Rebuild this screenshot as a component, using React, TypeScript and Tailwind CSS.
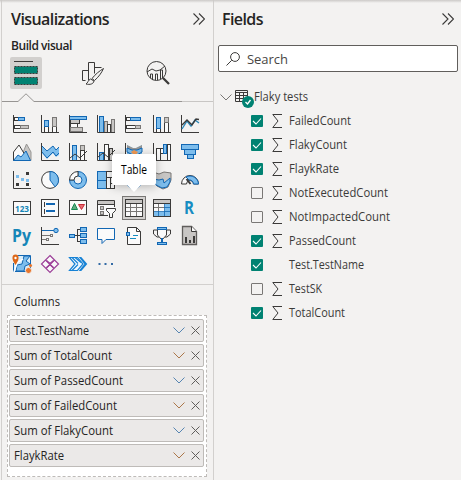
import React from "react";

const K = "#3b3a39";
const B = "#1267b3";
const L = "#7dbdec";
const G = "#c8c6c4";
const W = "#fafafa";

type BoxProps = { x: number; y: number; w: number; h: number; f?: string; s?: string };
const R = ({ x, y, w, h, f = W, s = K }: BoxProps) => (
  <rect x={x + 0.5} y={y + 0.5} width={w - 1} height={h - 1} fill={f} stroke={s} />
);
const Axis = () => <path d="M.5 0V17.5H18" fill="none" stroke={K} />;

const icons: React.ReactNode[] = [
  <><Axis /><R x={1} y={2} w={5} h={4} /><R x={5} y={2} w={7} h={4} f={L} s={B} /><R x={1} y={10} w={7} h={4} /><R x={7} y={10} w={9} h={4} f={G} s="#797775" /></>,
  <><Axis /><R x={3} y={11} w={5} h={7} /><R x={3} y={5} w={5} h={7} f={L} s={B} /><R x={11} y={11} w={5} h={7} /><R x={11} y={2} w={5} h={10} f={G} s="#797775" /></>,
  <><R x={1} y={4} w={10} h={5} f={G} /><R x={1} y={8} w={8} h={5} /><R x={1} y={12} w={13} h={5} f={G} s="#797775" /><R x={0} y={1} w={18} h={4} f={L} s={B} /><Axis /></>,
  <><R x={7} y={6} w={4} h={12} f={G} s="#797775" /><R x={10} y={9} w={4} h={9} /><R x={14} y={4} w={4} h={14} f={G} s="#797775" /><R x={2} y={1} w={5} h={17} f={L} s={B} /><Axis /></>,
  <><Axis /><R x={1} y={2} w={5} h={4} /><R x={5} y={2} w={11} h={4} f={L} s={B} /><R x={1} y={10} w={10} h={4} /><R x={10} y={10} w={6} h={4} f={G} s="#797775" /></>,
  <><Axis /><R x={3} y={13} w={5} h={5} /><R x={3} y={2} w={5} h={12} f={L} s={B} /><R x={11} y={7} w={5} h={11} /><R x={11} y={2} w={5} h={6} f={G} s="#797775" /></>,
  <><Axis /><path d="m1 13 5-8 4 5 4-6 4 3" fill="none" stroke="#2b88b8" strokeWidth="1.4" transform="translate(0 1)" /><path d="m1 10 5-5 5 5 4-6 3 .500" fill="none" stroke={K} strokeWidth="1.4" /></>,

  <><path d="M7 17 13.5 1 18 9v8.5z" fill={G} stroke="#979593" /><path d="M.5 17.5V9L6 2 12 12v5.500z" fill={W} stroke={K} /><path d="M.5 17.500 5 12l3 2 5-6 4.500 9.500z" fill={L} stroke={B} /></>,
  <><path d="m1 3 5 5 6-5 3 4 3-3v8l-3 2-3-4-6 6-5-6z" fill={L} /><path d="m1 3 5 5 6-5 3 4 3-3M1 9l5 6 6-6 3 4 3-3" fill="none" stroke={B} /><Axis /></>,
  <><R x={3} y={2} w={5} h={16} f={L} s={B} /><R x={11} y={2} w={5} h={6} f={G} s="#797775" /><R x={11} y={7} w={5} h={11} /><Axis /><path d="m1 15 5-4 5 4 7-7" fill="none" stroke={K} /></>,
  <><R x={2} y={9} w={5} h={9} f={L} s={B} /><R x={7} y={1} w={5} h={17} /><R x={12} y={5} w={4} h={13} f={G} /><Axis /><path d="m1 14 5-4 5 4 7-7" fill="none" stroke={K} /></>,
  <><path d="m2 2 6 3h3l6-3v13l-5-6H8l-6 5z" fill={L} /><path d="m2 2 6 3h3l6-3v5l-6 3H8L2 7z" fill="#979593" /><path d="m2 5 5 2h5l5-2v4l-5 3H8L2 9z" fill={L} stroke={B} /><path d="m6 9 3-2 4 2-3 4z" fill="#f39a52" /><Axis /></>,
  <><Axis /><R x={3} y={5} w={5} h={13} /><R x={7} y={5} w={5} h={6} /><R x={10} y={1} w={4} h={10} f={L} s={B} /><R x={14} y={1} w={4} h={17} /></>,
  <><R x={0} y={1} w={18} h={6} f={L} s={B} /><R x={3} y={6} w={12} h={6} f={L} s={B} /><R x={6} y={11} w={7} h={5} f={L} s={B} /></>,

  <><Axis /><path d="M13 1h3v3h-3zM3 12h3v3H3zM13 12h3v3h-3z" fill={K} /><path d="M3 4h3v3H3zM8 7h3v3H8zM13 8h3v3h-3z" fill={L} /></>,
  <><circle cx="9" cy="9" r="8.400" fill={W} stroke={K} /><path d="M9 .5a8.500 8.500 0 0 1 5 15.300L9 9z" fill={L} stroke={B} /></>,
  <><path fillRule="evenodd" d="M9 .5a8.500 8.500 0 1 1-8.500 8.500H5A4 4 0 1 0 9 5z" fill={L} stroke={B} /><path d="M.5 9A8.500 8.500 0 0 1 9 .5V5a4 4 0 0 0-4 4z" fill={W} stroke={K} /></>,
  <><R x={0} y={0} w={10} h={18} f={L} s={B} /><path d="M0 9.500h10" stroke={B} /><R x={9} y={0} w={9} h={7} /><R x={9} y={6} w={9} h={12} /><path d="M13.500 6v12M13 12.500h5" stroke={K} /></>,
  <><circle cx="9" cy="9" r="8.500" fill={L} stroke={B} /><path d="M2 6h14M2 12h14M9 1v16" stroke={B} /></>,
  <><path d="m0 1 6 2 5-2 7 1v7l-3 7-5 2-6-3-4-7z" fill={G} stroke="#797775" /><path d="m0 8 6 1 4-1 1 4 6-5v4l-3 5-5 1-6-3z" fill={L} stroke={B} /></>,
  <><path d="M.5 13a8.500 8.500 0 0 1 17 0h-5a3.500 3.500 0 0 0-7 0z" fill={W} stroke={K} /><path d="M5 6a8.500 8.500 0 0 1 12.500 7h-5A4 4 0 0 0 8 9z" fill={L} stroke={B} /><path d="m9.500 13-4-5" stroke={K} strokeWidth="2" /></>,

  <><R x={0} y={2} w={18} h={14} /><text x="2" y="12.500" fontSize="9.500" fontWeight="700" fill="#1686b8" textLength="14" lengthAdjust="spacingAndGlyphs" fontFamily="Open Sans">123</text></>,
  <><R x={0} y={0} w={18} h={18} /><path d="M3.500 3v5M3.500 10v5" stroke={K} /><path d="M5 5h9M5 12h9" stroke={B} strokeWidth="2" /></>,
  <><R x={0} y={1} w={18} h={15} /><path d="m2.500 10.500 3-6 3 6z" fill="#61aa80" stroke="#148852" /><path d="m9.500 5.500 3 5 3-5z" fill="#e86c72" stroke="#c82c37" /></>,
  <><path d="M17.500 8V1.500H.5v15H11" fill={W} stroke={K} /><path d="M1 2h16v3H1z" fill={G} /><path d="M1 5.500h16" stroke={K} /><R x={3} y={7} w={4} h={4} f={G} s="#797775" /><R x={3} y={12} w={4} h={4} f={G} s="#797775" /><path d="M9.500 9.500h9v2l-3 3v4h-3v-4l-3-3z" fill={W} stroke={K} /></>,
  <><R x={0} y={0} w={18} h={18} /><path d="M1 1h16v3H1z" fill={G} /><path d="M1 4.500h16" stroke={K} /><path d="M1 8.500h16M1 12.500h16M5.500 5v12M11.500 5v12" stroke="#797775" /></>,
  <><R x={0} y={0} w={18} h={18} /><path d="M12 5h5v12H1v-4h11z" fill={L} /><path d="M1 1h16v3H1z" fill={G} /><path d="M0 4.500h18" stroke={K} /><path d="M1 8.500h11M5.500 5v7" stroke="#797775" /><path d="M12 8.500h5M1 12.500h16M5.500 12v5M11.500 5v12" stroke={B} strokeWidth=".8" /></>,
  <text x="3" y="15" fontSize="17" fontWeight="700" fill="#168dc2" textLength="10" lengthAdjust="spacingAndGlyphs" fontFamily="Open Sans">R</text>,

  <text x="-1" y="14.500" fontSize="17" fontWeight="700" fill="#1686b8" textLength="19" lengthAdjust="spacingAndGlyphs" fontFamily="Open Sans">Py</text>,
  <><Axis /><path d="M1 3.500h12" stroke={B} /><circle cx="15" cy="3.500" r="2.200" fill={L} stroke={B} /><path d="M1 8.500h8M1 12.500h4" stroke="#797775" /><R x={9} y={7} w={3} h={3} s="#797775" /><R x={5} y={11} w={3} h={3} s="#797775" /></>,
  <><path d="M6 8.500h6M8.500 2.500v12M8 2.500h4M8 14.500h4" stroke={K} fill="none" /><R x={0} y={7} w={6} h={4} f={L} s={B} /><R x={11} y={0} w={7} h={5} f={L} s={B} /><R x={11} y={6} w={7} h={5} f={L} s={B} /><R x={11} y={12} w={7} h={5} f={L} s={B} /></>,
  <path d="M.5 1.500h17v11H9l-4 4v-4H.5z" fill={W} stroke={B} />,
  <><path d="M2.500.5h9l4 4v13h-13z" fill={W} stroke={K} /><path d="M11.500.5v4h4" fill="none" stroke={K} /><R x={1} y={5} w={4} h={4} f={L} s={B} /><path d="M8 8.500h5M5 11.500h6" stroke="#168dc2" /></>,
  <><path d="M4 3H.5v4L4 10h2M14 3h3.500v4L14 10h-2" fill="none" stroke={K} /><path d="M4.500 2v6L9 13l4.500-5V2z" fill={W} stroke={K} /><R x={4} y={0} w={10} h={3} f={L} s={B} /><path d="M9 11v4" stroke={B} strokeWidth="2" /><R x={4} y={15} w={10} h={3} f={L} s={B} /></>,
  <><path d="M1.500-.5h9l5 5v13h-14z" fill={G} stroke="#605e5c" strokeWidth="1.300" /><path d="M10.500-.5v5h5" fill={W} stroke={K} /><path d="M4 10h2v6H4zM8 13h2v3H8zM12 9h2v7h-2z" fill={K} /></>,

  <><path d="M4.500.500h13v16H.5V8" fill="#d9edfa" stroke={B} /><path d="M11 1h6l-4 5 4 3-5 2-1 5H3l1-6 5-1z" fill={L} stroke={B} /><path d="M1 17 4 8l6-4" fill="none" stroke="#fff" strokeWidth="1.500" /><path d="M2.500 10C0 6-.5 5-.5 2.500a3 3 0 0 1 6 0C5.500 5 5 6 2.500 10z" fill="#dd6718" /><circle cx="2.500" cy="3" r="1.200" fill="#fff" /><circle cx="15.500" cy="15.500" r="3" fill="#e8762d" stroke="#f3f2f1" strokeWidth=".8" /><circle cx="17.500" cy="10.500" r="1.600" fill="#e8762d" /></>,
  <g fill={W} stroke="#9c3f98" strokeWidth="1.200"><path d="m9 .5 8.500 8.500L9 17.500.5 9zM4.500 5l8.500 8.500M13.500 5 5 13.500" /><path d="m5.500 5.500 3.500 3 3.500-3M5.500 12.500l3.500-3 3.500 3" fill="none" /></g>,
  <g fill="#eff8ff" stroke="#1682d5" strokeWidth="1.200"><path d="M.5 2.500h8L14 9l-5.500 6.500h-8L6 9z" /><path d="m3 2.500 6 6M6 2.500l6 5M3 15.500l6-6" /><path d="M11 2.500h1l5.500 6.500-5.500 6.500h-1L16 9z" /></g>,
  <path d="M1.500 8h2v2h-2zM7.500 8h2v2h-2zM14 8h2v2h-2z" fill="#336ba5" />,
];

const Label = ({ children, w, color = "#252423" }: { children: string; w: number; color?: string }) => (
  <svg className="block h-4 shrink-0 overflow-visible" width={w} height="16" aria-label={children}>
    <text x="0" y="12" fontSize="12" fill={color} textLength={w} lengthAdjust="spacingAndGlyphs" fontFamily="Open Sans">{children}</text>
  </svg>
);

const Collapse = () => (
  <svg className="h-3 w-3" viewBox="0 0 12 12" fill="none" stroke="#3b3a39" strokeWidth="1.1"><path d="m.5.5 5.500 5.500L.5 11.500M6 .5 11.500 6 6 11.500" /></svg>
);

const columns: [string, number, string][] = [
  ["Test.TestName", 75, "#5685b2"], ["Sum of TotalCount", 98, "#ab7648"], ["Sum of PassedCount", 109, "#5685b2"],
  ["Sum of FailedCount", 103, "#ab7648"], ["Sum of FlakyCount", 99, "#5685b2"], ["FlaykRate", 50, "#ab7648"],
];
const fields: [string, number, boolean, boolean][] = [
  ["FailedCount", 62, true, true], ["FlakyCount", 58, true, true], ["FlaykRate", 50, true, true],
  ["NotExecutedCount", 99, false, true], ["NotImpactedCount", 101, false, true], ["PassedCount", 67, true, true],
  ["Test.TestName", 75, true, false], ["TestSK", 33, false, true], ["TotalCount", 56, true, true],
];

export default function App() {
  return (
    <div className="relative flex h-[480px] w-[461px] overflow-hidden bg-[#f3f2f1] font-['Open_Sans',sans-serif] text-[#252423]">
      <section className="w-[214px] shrink-0 border-r border-[#d2d0ce] pl-px">
        <div className="h-[480px] border-l border-[#d2d0ce]">
          <header className="flex h-[37px] items-center justify-between pl-[9px] pr-2 pt-[1px]">
            <h1 className="text-base font-semibold leading-5 tracking-[-0.57px]">Visualizations</h1><Collapse />
          </header>
          <h2 className="h-5 pl-[9px] text-xs font-semibold leading-[17px] tracking-[-0.45px]">Build visual</h2>
          <div className="flex h-[32px] pl-2">
            <div className="mr-[39px] h-8 w-8 rounded-xs bg-[#d2d0ce]">
              <svg className="size-8" viewBox="0 0 32 32"><path d="M4 4.500h19" stroke={K} /><g fill="#008272" stroke={K} strokeDasharray="2 1"><path d="M4.500 9.500h23v7h-23zM4.500 20.500h23v7h-23z" /></g></svg>
            </div>
            <svg className="mr-[41px] mt-[5px] h-6 w-6" viewBox="0 0 24 24" fill="none" stroke={K}><path d="M4.500 18.500h-3v-10h6V18M7.500 9V.5h6v11M13.500 5.500h7" /><path d="M22.500 6.500c-4 2.500-8 5.500-11.500 10l2.500 2c4-3.500 7-7.500 9-12z" /><path d="M5 22c2-1 2-4 4.500-5l3.500 2c-.5 3-4 4-8 3z" /></svg>
            <svg className="mt-1 size-6" viewBox="0 0 24 24" fill="none" stroke={K}><circle cx="10.500" cy="10" r="9.500" /><path d="m1 11 5-3 4 2 4-1 5-4M4.500 17v-4h2v6M9.500 19v-6h2v6M14.500 18V9h2v8" /><path d="m17 17 6 6" strokeWidth="2.300" /></svg>
          </div>
          <svg className="mt-[4px] h-[9px] w-[211px]" viewBox="0 0 211 9" fill="none"><path d="M0 8.500h16L24 .8l8 7.700h148" stroke="#979593" /><path d="M180 8.500h31" stroke="#c8c6c4" /></svg>
          <div className="grid h-[182px] grid-cols-[repeat(7,28px)] grid-rows-[repeat(6,28px)] pl-[11px] pt-[13px]">
            {icons.map((icon, i) => (
              <div key={i} className={i === 25 ? "-ml-[3px] -mt-[3px] h-6 w-6 bg-[#d2d0ce] p-[3px] outline outline-1 -outline-offset-1 outline-[#797775]" : "h-[18px] w-[18px]"}>
                <svg className="block size-[18px] overflow-visible" viewBox="0 0 18 18">{icon}</svg>
              </div>
            ))}
          </div>
          <div className="border-t border-[#d2d0ce] pl-[5px] pr-[6px]">
            <div className="h-[30px] pl-[7px] pt-[9px]"><Label w={46}>Columns</Label></div>
            <div className="h-[162px] border border-dashed border-[#bebbb8] bg-white pl-[1px] pr-[2px] pt-[3px]">
              {columns.map(([name, width, color]) => (
                <div key={name} className="mb-[2px] flex h-[23px] items-center rounded-xs border border-[#bebbb8] bg-[#ebe9e8] pl-1 pr-[3px]">
                  <Label w={width}>{name}</Label>
                  <svg className="ml-auto mr-[6px] h-[7px] w-3" viewBox="0 0 12 7" fill="none" stroke={color}><path d="m.5.5 5.500 5.500L11.500.5" /></svg>
                  <svg className="size-[9px]" viewBox="0 0 9 9" stroke="#605e5c"><path d="m.5.5 8 8m0-8-8 8" /></svg>
                </div>
              ))}
            </div>
          </div>
        </div>
      </section>

      <section className="flex-1 pl-1">
        <header className="flex h-[45px] items-start justify-between pl-1 pr-[7px] pt-[9px]">
          <h1 className="text-base font-semibold leading-5 tracking-[-0.6px]">Fields</h1><div className="pt-1"><Collapse /></div>
        </header>
        <div className="flex h-[27px] w-[240px] items-center rounded-xs border border-[#605e5c] bg-white pl-[7px]">
          <svg className="mr-[7px] size-[14px]" viewBox="0 0 14 14" fill="none" stroke="#3b3a39"><circle cx="9" cy="5" r="4.400" /><path d="M5.700 8.300.5 13.500" /></svg>
          <span className="text-[13px] leading-5 tracking-[-0.05px] text-[#484644]">Search</span>
        </div>
        <div className="mt-[13px] flex h-6 items-center pl-[2px]">
          <svg className="mr-[3px] h-[7px] w-3" viewBox="0 0 12 7" fill="none" stroke="#797775"><path d="m.5.5 5.500 5.500L11.500.5" /></svg>
          <svg className="mr-[6px] h-3 w-[13px] overflow-visible" viewBox="0 0 13 12"><path d="M.5-.5h12v11H.5zM0 1.500h13M0 4.500h13M0 7.500h13M4.500 1v10M8.500 1v10" fill="none" stroke={K} /><circle cx="13" cy="11" r="6" fill="#008272" /><path d="m10.500 11 2 2 3-4" fill="none" stroke="white" strokeWidth="1.300" /></svg>
          <Label w={54} color="#3b3a39">Flaky tests</Label>
        </div>
        {fields.map(([name, width, checked, numeric]) => (
          <div key={name} className="flex h-6 items-center pl-[33px]">
            <div className={checked ? "size-3 rounded-[1px] bg-[#008272]" : "size-3 rounded-[1px] border border-[#797775]"}>
              {checked && <svg className="size-3" viewBox="0 0 12 12" fill="none" stroke="white" strokeWidth="1.100"><path d="m2 6 3 3 5-5.500" /></svg>}
            </div>
            <div className="ml-[9px] mr-[7px] h-[14px] w-[10px]">
              {numeric && <svg className="h-[14px] w-[10px]" viewBox="0 0 10 14" fill="none" stroke={K}><path d="M10 .5H.8L6 7l-5.200 6.500H10" /></svg>}
            </div>
            <Label w={width} color="#3b3a39">{name}</Label>
          </div>
        ))}
      </section>

      <div className="absolute inset-x-0 top-0 h-[3px] bg-gradient-to-b from-[#cccac8] to-transparent" />
      <div className="absolute left-[112px] top-[154px] flex h-[31px] w-11 items-center justify-center rounded-xs bg-white shadow-[0_2px_10px_rgba(0,0,0,.25)]">
        <Label w={26} color="#000000">Table</Label>
        <div className="absolute -bottom-[7px] left-[14px] h-0 w-0 border-x-8 border-t-8 border-x-transparent border-t-white" />
      </div>
    </div>
  );
}
